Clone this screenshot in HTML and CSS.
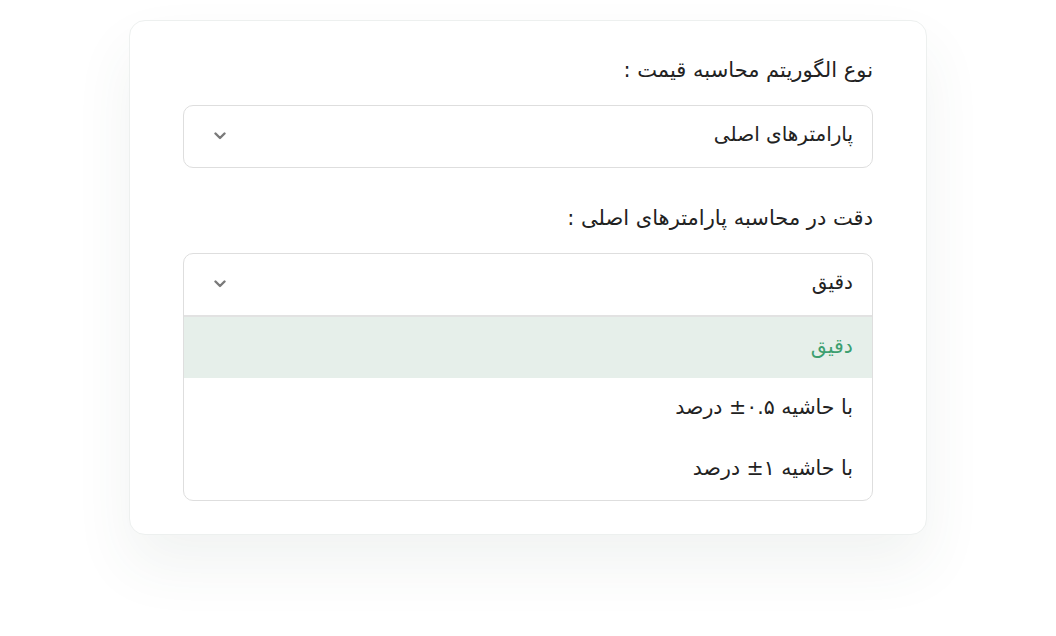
FILE: index.html
```html
<!DOCTYPE html>
<html lang="fa" dir="rtl">

<head>
  <meta charset="UTF-8" />
  <meta name="viewport" content="width=device-width, initial-scale=1.0" />
  <title>الگوریتم قیمت</title>
  <link rel="stylesheet" href="styles.css">
</head>

<body>
  <div class="card">
    <div class="field">
      <label class="field-label">نوع الگوریتم محاسبه قیمت :</label>
      <div class="select">
        <div class="select-head">
          <span>پارامترهای اصلی</span>
          <svg class="chevron" width="12" height="8" viewBox="0 0 12 8"><polyline points="1.5,1.5 6,6 10.5,1.5" /></svg>
        </div>
      </div>
    </div>

    <div class="field">
      <label class="field-label">دقت در محاسبه پارامترهای اصلی :</label>
      <div class="select open">
        <div class="select-head">
          <span>دقیق</span>
          <svg class="chevron" width="12" height="8" viewBox="0 0 12 8"><polyline points="1.5,1.5 6,6 10.5,1.5" /></svg>
        </div>
        <div class="options">
          <div class="option active">دقیق</div>
          <div class="option">با حاشیه ۰.۵± درصد</div>
          <div class="option">با حاشیه ۱± درصد</div>
        </div>
      </div>
    </div>
  </div>
</body>

</html>
```

FILE: styles.css
```css
/* Base resets & typography */
* {
  box-sizing: border-box;
  margin: 0;
  padding: 0;
}

body {
  font-family: "DejaVu Sans", sans-serif;
  background-color: #fff;
  color: #222;
  padding-top: 20px;
  height: 100vh;
}

.card {
  width: 798px;
  margin: 0 auto;
  background: #fff;
  border: 1px solid #edf0ef;
  border-radius: 16px;
  box-shadow: 0 30px 60px rgba(60, 80, 70, 0.07);
  padding: 35px 53px 33px;
  display: flex;
  flex-direction: column;
  gap: 36px;
}

.field {
  display: flex;
  flex-direction: column;
  gap: 21px;
}

.field-label {
  font-size: 21px;
  line-height: 28px;
}

.select {
  border: 1px solid #dedede;
  border-radius: 10px;
  background: #fff;
  overflow: hidden;
}

.select-head {
  height: 61px;
  display: flex;
  align-items: center;
  justify-content: space-between;
  padding: 0 19px 5px 30px;
  font-size: 20px;
}

.chevron {
  fill: none;
  stroke: #7a7a7a;
  stroke-width: 2.4;
  stroke-linecap: round;
  stroke-linejoin: round;
  margin-top: 3px;
}

.options {
  border-top: 2px solid #e2e2e2;
}

.option {
  height: 61px;
  display: flex;
  align-items: center;
  padding: 0 19px 4px;
  font-size: 20.5px;
}

.option.active {
  background-color: #e6efea;
  color: #3d9f70;
}
```
